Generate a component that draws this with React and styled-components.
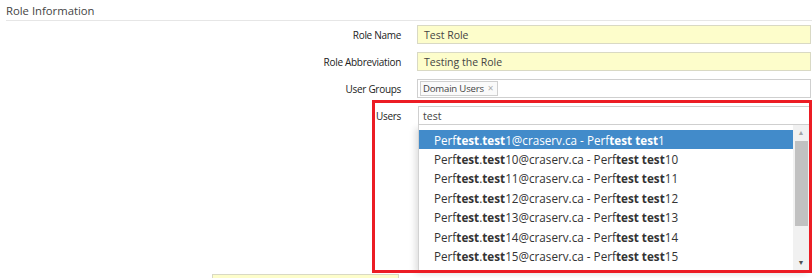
import styled, { createGlobalStyle } from "styled-components";

const GlobalStyle = createGlobalStyle`
  html, body {
    margin: 0;
    background: #fff;
    font-family: "Open Sans", "Liberation Sans", Arial, sans-serif;
    color: #333;
  }
  * { box-sizing: border-box; }
`;

const Page = styled.div`
  width: 812px;
  height: 278px;
  overflow: hidden;
  position: relative;
`;

const SectionTitle = styled.h2`
  margin: 0 0 0 6px;
  padding: 3px 0 0;
  height: 21px;
  font-size: 11.3px;
  font-weight: 400;
  color: #444;
  border-bottom: 1px solid #e6e6e6;
  line-height: 16px;
`;

const Form = styled.div`
  display: flex;
  flex-direction: column;
  gap: 8px;
  padding: 4px 1px 0 0;
`;

const Row = styled.div`
  position: relative;
  display: grid;
  grid-template-columns: 401px 1fr;
  column-gap: ${({ $gap }) => $gap || 16}px;
  align-items: center;
`;

const Label = styled.label`
  text-align: right;
  font-size: 10px;
  font-weight: 500;
  letter-spacing: -0.3px;
  color: #222;
`;

const Input = styled.div`
  height: 19px;
  display: flex;
  align-items: center;
  gap: 4px;
  padding: 0 ${({ $pad }) => $pad ?? 6}px;
  border: 1px solid ${({ $yellow }) => ($yellow ? "#d9d9c4" : "#cfcfcf")};
  background: ${({ $yellow }) => ($yellow ? "#fdfdcb" : "#fff")};
  font-size: 10.5px;
  color: #444;
  ${({ $over }) => $over && "position: relative; z-index: 3;"}
`;

const Tag = styled.span`
  display: inline-flex;
  align-items: center;
  gap: 4px;
  height: 15px;
  padding: 0 4px 0 2px;
  border: 1px solid #cfcfcf;
  background: #fafafa;
  font-size: 9.6px;
  letter-spacing: -0.2px;
  color: #444;
  line-height: 13px;

  i {
    font-style: normal;
    color: #aaa;
    font-size: 10px;
  }
`;

const Highlight = styled.div`
  position: absolute;
  left: 372px;
  top: -6px;
  width: 440px;
  height: 173px;
  border: 3px solid #ec1c24;
  z-index: 5;
  pointer-events: none;
`;

const Dropdown = styled.div`
  position: absolute;
  left: 418px;
  top: 19px;
  width: 392px;
  height: 146px;
  display: flex;
  background: #fff;
  border: 1px solid #d2d2d2;
  border-top: none;
  box-shadow: -3px 3px 6px rgba(0, 0, 0, 0.12);
  z-index: 2;
`;

const List = styled.ul`
  flex: 1;
  margin: 0;
  padding: 5px 0 0;
  list-style: none;
`;

const Item = styled.li`
  height: 19.4px;
  display: flex;
  align-items: center;
  padding-left: 15px;
  font-size: 11.7px;
  white-space: nowrap;
  color: ${({ $active }) => ($active ? "#fff" : "#333")};
  background: ${({ $active }) => ($active ? "#428bca" : "transparent")};

  b {
    font-weight: 700;
  }
`;

const Scrollbar = styled.div`
  width: 16px;
  display: flex;
  flex-direction: column;
  align-items: center;
  background: #f1f1f1;
`;

const Arrow = styled.div`
  height: 15px;
  display: flex;
  align-items: center;
  justify-content: center;
  font-size: 7px;
  color: ${({ $dim }) => ($dim ? "#a3a3a3" : "#505050")};
`;

const Thumb = styled.div`
  width: 13px;
  height: 85px;
  margin-top: 1px;
  background: #c1c1c1;
`;

const Track = styled.div`
  flex: 1;
`;

const NextRow = styled.div`
  display: flex;
  margin-top: 149px;
  padding-left: 212px;
`;

const NextInput = styled.div`
  width: 187px;
  height: 20px;
  border: 1px solid #d9d9c4;
  background: #fdfdcb;
`;

const users = [1, 10, 11, 12, 13, 14, 15];

function UserOption({ n, active }) {
  return (
    <Item $active={active}>
      Perf<b>test</b>.<b>test</b>
      {n}@craserv.ca - Perf<b>test</b>&nbsp;<b>test</b>
      {n}
    </Item>
  );
}

export default function App() {
  return (
    <>
      <GlobalStyle />
      <Page>
        <SectionTitle>Role Information</SectionTitle>
        <Form>
          <Row>
            <Label>Role Name</Label>
            <Input $yellow>Test Role</Input>
          </Row>
          <Row>
            <Label>Role Abbreviation</Label>
            <Input $yellow>Testing the Role</Input>
          </Row>
          <Row>
            <Label>User Groups</Label>
            <Input $pad={2}>
              <Tag>
                Domain Users <i>×</i>
              </Tag>
            </Input>
          </Row>
          <Row $gap={17}>
            <Label>Users</Label>
            <Input $over $pad={4}>test</Input>
            <Dropdown>
              <List>
                {users.map((n, i) => (
                  <UserOption key={n} n={n} active={i === 0} />
                ))}
              </List>
              <Scrollbar>
                <Arrow $dim>▲</Arrow>
                <Thumb />
                <Track />
                <Arrow>▼</Arrow>
              </Scrollbar>
            </Dropdown>
            <Highlight />
          </Row>
        </Form>
        <NextRow>
          <NextInput />
        </NextRow>
      </Page>
    </>
  );
}
